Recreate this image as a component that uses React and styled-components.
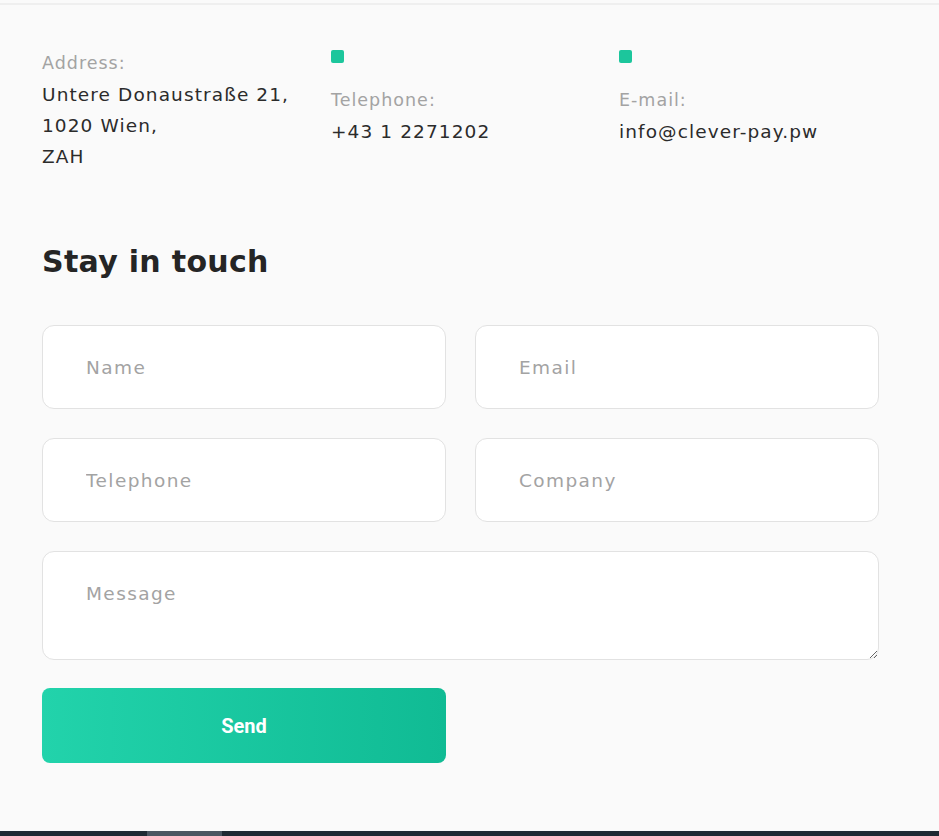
import styled, { createGlobalStyle } from 'styled-components';

const GlobalStyle = createGlobalStyle`
  html, body {
    margin: 0;
    padding: 0;
    background: #fafafa;
  }
  body {
    font-family: 'DejaVu Sans', 'Noto Sans', sans-serif;
  }
`;

const Page = styled.div`
  position: relative;
  width: 939px;
  height: 836px;
  overflow: hidden;
  background: #fafafa;
  display: flex;
  flex-direction: column;
`;

const TopLine = styled.div`
  height: 2px;
  margin-top: 3px;
  background: #efefef;
`;

const Content = styled.div`
  flex: 1;
  padding: 45px 60px 0 42px;
`;

const Contacts = styled.div`
  display: grid;
  grid-template-columns: 289px 288px 1fr;
`;

const ContactItem = styled.div`
  display: flex;
  flex-direction: column;
`;

const Marker = styled.span`
  display: block;
  width: 13px;
  height: 13px;
  border-radius: 2px;
  background: #1cc69c;
  margin: 0 0 22px 0;
`;

const Label = styled.div`
  font-size: 17.5px;
  line-height: 31px;
  letter-spacing: 1px;
  color: #a3a3a3;
  margin-top: ${(p) => (p.$first ? '-2px' : '0')};
`;

const Value = styled.div`
  font-size: 18.5px;
  line-height: 31px;
  letter-spacing: 1.1px;
  color: #2b2b2b;
`;

const Title = styled.h2`
  margin: 70px 0 0 0;
  font-size: 30px;
  line-height: 40px;
  font-weight: 700;
  letter-spacing: 0.3px;
  color: #252525;
`;

const Form = styled.form`
  margin-top: 43px;
  display: grid;
  grid-template-columns: 404px 404px;
  column-gap: 29px;
  row-gap: 29px;
`;

const Field = styled.input`
  box-sizing: border-box;
  height: 84px;
  width: 100%;
  border: 1px solid #e2e2e2;
  border-radius: 12px;
  background: #ffffff;
  padding: 0 0 0 43px;
  font-family: inherit;
  font-size: 18.5px;
  letter-spacing: 1.4px;
  color: #333;
  outline: none;
  &::placeholder {
    color: #a3a3a3;
  }
`;

const Message = styled.textarea`
  grid-column: 1 / -1;
  box-sizing: border-box;
  height: 109px;
  width: 100%;
  border: 1px solid #e2e2e2;
  border-radius: 12px;
  background: #ffffff;
  padding: 31px 0 0 43px;
  font-family: inherit;
  font-size: 18.5px;
  letter-spacing: 1.4px;
  color: #333;
  outline: none;
  resize: vertical;
  &::placeholder {
    color: #a3a3a3;
  }
`;

const SendButton = styled.button`
  all: unset;
  box-sizing: border-box;
  margin-top: -1px;
  height: 75px;
  width: 404px;
  border-radius: 8px;
  background: linear-gradient(90deg, #22d3ab 0%, #10bb94 100%);
  color: #ffffff;
  font-family: Roboto, 'Liberation Sans', sans-serif;
  font-weight: 700;
  font-size: 20px;
  display: flex;
  align-items: center;
  justify-content: center;
  cursor: pointer;
`;

const BottomBar = styled.div`
  height: 5px;
  background: #1f2a33;
  display: flex;
`;

const BarThumb = styled.div`
  margin-left: 147px;
  width: 75px;
  background: #4a5661;
`;

const contacts = [
  { label: 'Address:', lines: ['Untere Donaustraße 21,', '1020 Wien,', 'ZAH'], marker: false },
  { label: 'Telephone:', lines: ['+43 1 2271202'], marker: true },
  { label: 'E-mail:', lines: ['info@clever-pay.pw'], marker: true },
];

const App = () => {
  return (
    <Page>
      <GlobalStyle />
      <TopLine />
      <Content>
        <Contacts>
          {contacts.map((c) => (
            <ContactItem key={c.label}>
              {c.marker && <Marker />}
              <Label $first={!c.marker}>{c.label}</Label>
              {c.lines.map((l) => (
                <Value key={l}>{l}</Value>
              ))}
            </ContactItem>
          ))}
        </Contacts>
        <Title>Stay in touch</Title>
        <Form onSubmit={(e) => e.preventDefault()}>
          <Field placeholder="Name" />
          <Field placeholder="Email" />
          <Field placeholder="Telephone" />
          <Field placeholder="Company" />
          <Message placeholder="Message" />
          <SendButton type="submit">Send</SendButton>
        </Form>
      </Content>
      <BottomBar>
        <BarThumb />
      </BottomBar>
    </Page>
  );
};

export default App;
